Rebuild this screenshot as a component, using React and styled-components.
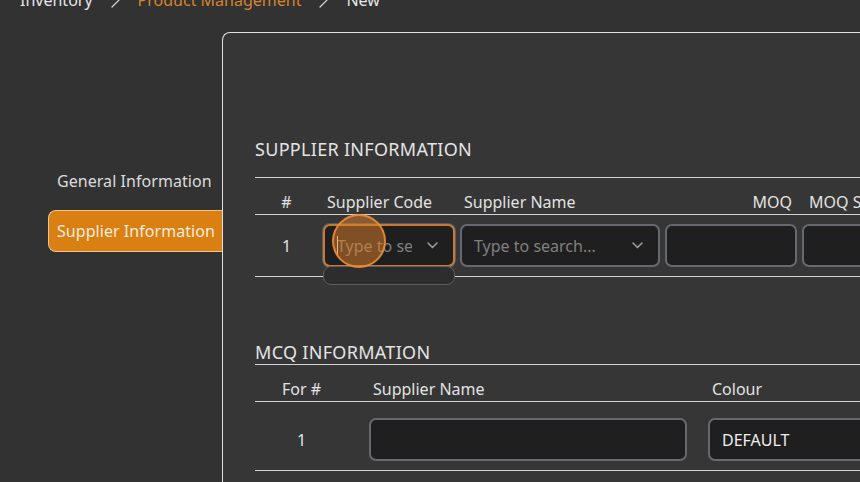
import React from 'react';
import styled, { createGlobalStyle } from 'styled-components';

const Global = createGlobalStyle`
  html, body { margin: 0; padding: 0; background: #323232; }
  body { font-family: "Noto Sans", "Open Sans", sans-serif; color: #e2e2e2; overflow: hidden; }
  * { box-sizing: border-box; }
`;

const Page = styled.div`
  width: 860px;
  height: 482px;
  overflow: hidden;
  background: #323232;
`;

const Breadcrumb = styled.nav`
  display: flex;
  align-items: center;
  height: 24px;
  margin-top: -12px;
  padding-left: 20px;
  font-size: 16px;
  line-height: 24px;
`;

const Crumb = styled.span`
  color: ${p => (p.$active ? '#d6852e' : '#e6e6e6')};
  white-space: nowrap;
`;

const Sep = styled.span`
  display: flex;
  justify-content: center;
  align-items: center;
  width: 45px;
  color: #cfcfcf;
`;

const Main = styled.div`
  display: flex;
  margin-top: 20px;
`;

const Sidebar = styled.aside`
  flex: none;
  width: 222px;
  padding-top: 128px;
  display: flex;
  flex-direction: column;
  gap: 8px;
`;

const NavItem = styled.div`
  margin-left: 48px;
  height: 42px;
  display: flex;
  align-items: center;
  padding-left: 8px;
  font-size: 16px;
  letter-spacing: 0.05px;
  white-space: nowrap;
  border: 1px solid ${p => (p.$active ? '#efc48e' : 'transparent')};
  border-right: none;
  border-radius: 8px 0 0 8px;
  background: ${p => (p.$active ? '#da7f12' : 'transparent')};
  color: ${p => (p.$active ? '#f6ecdf' : '#dcdcdc')};
`;

const Card = styled.section`
  flex: none;
  width: 1000px;
  height: 600px;
  background: #363636;
  border-top: 1px solid #e2e2e2;
  border-left: 1px solid #e2e2e2;
  border-top-left-radius: 8px;
  padding: 104px 0 0 32px;
`;

const Section = styled.div`
  margin-top: ${p => p.$top || 0}px;
`;

const SectionTitle = styled.h2`
  margin: 0;
  font-size: 18px;
  font-weight: 400;
  line-height: 24px;
  letter-spacing: 0.3px;
  color: #e4e4e4;
  padding-bottom: ${p => p.$pad || 0}px;
  border-bottom: 1px solid #d4d4d4;
`;

const Row = styled.div`
  display: grid;
  grid-template-columns: ${p => p.$cols};
  column-gap: ${p => p.$gap}px;
  align-items: center;
  border-bottom: 1px solid #d4d4d4;
  padding: ${p => p.$pad};
`;

const HeadCell = styled.div`
  font-size: 16px;
  line-height: 24px;
  color: #e2e2e2;
  white-space: nowrap;
  overflow: hidden;
  text-align: ${p => p.$align || 'left'};
  padding-right: ${p => (p.$align === 'right' ? 5 : 0)}px;
  padding-left: ${p => (p.$inset != null ? p.$inset : p.$align ? 0 : 4)}px;
`;

const IndexCell = styled.div`
  font-size: 16px;
  line-height: 24px;
  text-align: center;
  color: #e2e2e2;
`;

const Field = styled.input`
  height: 43px;
  width: 100%;
  border: 2px solid #66696f;
  border-radius: 7px;
  background: #1f1f1f;
  color: #eeeeee;
  font-family: inherit;
  font-size: 16px;
  padding: 0 12px;
  outline: none;
`;

const SelectBox = styled.div`
  position: relative;
  height: 43px;
  display: flex;
  align-items: center;
  gap: 15px;
  padding: 0 15px 0 12px;
  border: 2px solid ${p => (p.$focused ? '#c97a30' : '#66696f')};
  box-shadow: ${p => (p.$focused ? '0 0 0 1px #565b66' : 'none')};
  border-radius: 7px;
  background: #1f1f1f;
`;

const SelectInput = styled.input`
  flex: 1;
  min-width: 0;
  height: 100%;
  border: none;
  background: transparent;
  color: #eeeeee;
  font-family: inherit;
  font-size: 16px;
  padding: 0;
  outline: none;
  &::placeholder { color: #808080; opacity: 1; }
`;

const Caret = styled.span`
  position: absolute;
  left: 12px;
  top: 10px;
  width: 1px;
  height: 19px;
  background: #e8e8e8;
`;

const Menu = styled.div`
  position: absolute;
  left: -2px;
  right: -2px;
  top: calc(100% + 1px);
  height: 19px;
  border: 1.5px solid #5e5e5e;
  border-radius: 8px;
  background: #2d2d2d;
  z-index: 2;
`;

const ClickMark = styled.span`
  position: absolute;
  left: 7px;
  top: -12px;
  width: 54px;
  height: 54px;
  border-radius: 50%;
  background: rgba(226, 128, 40, 0.5);
  border: 2px solid rgba(238, 145, 55, 0.85);
  z-index: 3;
`;

const Chevron = () => (
  <svg width="11" height="7" viewBox="0 0 11 7" fill="none">
    <path d="M1 1l4.5 4.5L10 1" stroke="#9a9a9a" strokeWidth="1.6" strokeLinecap="round" strokeLinejoin="round" />
  </svg>
);

const CrumbChevron = () => (
  <svg width="9" height="16" viewBox="0 0 9 16" fill="none">
    <path d="M1 1l7 7-7 7" stroke="#cfcfcf" strokeWidth="1.3" strokeLinecap="round" strokeLinejoin="round" />
  </svg>
);

const SUP_COLS = '63px 132px 200px 132px 150px';
const MCQ_COLS = '93px 318px 300px';

export default function App() {
  return (
    <Page>
      <Global />
      <Breadcrumb>
        <Crumb>Inventory</Crumb>
        <Sep><CrumbChevron /></Sep>
        <Crumb $active>Product Management</Crumb>
        <Sep><CrumbChevron /></Sep>
        <Crumb>New</Crumb>
      </Breadcrumb>
      <Main>
        <Sidebar>
          <NavItem>General Information</NavItem>
          <NavItem $active>Supplier Information</NavItem>
        </Sidebar>
        <Card>
          <Section>
            <SectionTitle $pad={16}>SUPPLIER INFORMATION</SectionTitle>
            <Row $cols={SUP_COLS} $gap={5} $pad="12px 0 0">
              <HeadCell $align="center">#</HeadCell>
              <HeadCell>Supplier Code</HeadCell>
              <HeadCell>Supplier Name</HeadCell>
              <HeadCell $align="right">MOQ</HeadCell>
              <HeadCell $inset={7}>MOQ Surcharge</HeadCell>
            </Row>
            <Row $cols={SUP_COLS} $gap={5} $pad="9px 0">
              <IndexCell>1</IndexCell>
              <SelectBox $focused>
                <SelectInput placeholder="Type to search..." readOnly />
                <Chevron />
                <Caret />
                <ClickMark />
                <Menu />
              </SelectBox>
              <SelectBox>
                <SelectInput placeholder="Type to search..." readOnly />
                <Chevron />
              </SelectBox>
              <Field readOnly />
              <Field readOnly />
            </Row>
          </Section>
          <Section $top={63}>
            <SectionTitle>MCQ INFORMATION</SectionTitle>
            <Row $cols={MCQ_COLS} $gap={21} $pad="12px 0 0">
              <HeadCell $align="center">For #</HeadCell>
              <HeadCell>Supplier Name</HeadCell>
              <HeadCell>Colour</HeadCell>
            </Row>
            <Row $cols={MCQ_COLS} $gap={21} $pad="16px 0 9px">
              <IndexCell>1</IndexCell>
              <Field readOnly />
              <Field readOnly defaultValue="DEFAULT" />
            </Row>
          </Section>
        </Card>
      </Main>
    </Page>
  );
}
